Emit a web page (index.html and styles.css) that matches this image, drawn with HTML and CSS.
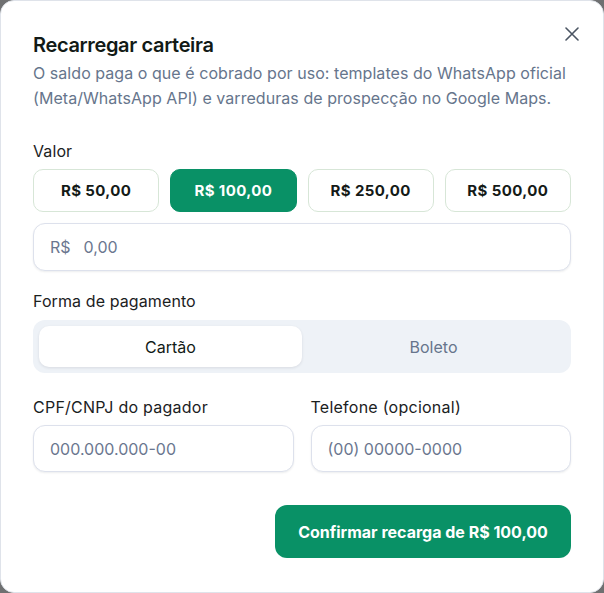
FILE: index.html
```html
<!DOCTYPE html>
<html lang="pt-BR">
<head>
    <meta charset="UTF-8">
    <title>Recarregar carteira</title>
    <link rel="stylesheet" href="styles.css">
</head>
<body>
<div class="modal">
    <button class="close" aria-label="Fechar">
        <svg width="14" height="14" viewBox="0 0 14 14"><path d="M1 1L13 13M13 1L1 13" stroke="#4b5563" stroke-width="1.6" stroke-linecap="round"/></svg>
    </button>
    <h2 class="title">Recarregar carteira</h2>
    <p class="desc">O saldo paga o que é cobrado por uso: templates do WhatsApp oficial (Meta/WhatsApp API) e varreduras de prospecção no Google Maps.</p>

    <div class="field first">
        <label class="label">Valor</label>
        <div class="amounts">
            <button class="amount">R$ 50,00</button>
            <button class="amount active">R$ 100,00</button>
            <button class="amount">R$ 250,00</button>
            <button class="amount">R$ 500,00</button>
        </div>
        <div class="input money">
            <span class="prefix">R$</span>
            <span class="ph">0,00</span>
        </div>
    </div>

    <div class="field">
        <label class="label">Forma de pagamento</label>
        <div class="tabs">
            <div class="tab on">Cartão</div>
            <div class="tab">Boleto</div>
        </div>
    </div>

    <div class="cols">
        <div class="col">
            <label class="label">CPF/CNPJ do pagador</label>
            <div class="input small"><span class="ph">000.000.000-00</span></div>
        </div>
        <div class="col">
            <label class="label">Telefone (opcional)</label>
            <div class="input small"><span class="ph">(00) 00000-0000</span></div>
        </div>
    </div>

    <div class="actions">
        <button class="confirm">Confirmar recarga de R$ 100,00</button>
    </div>
</div>
</body>
</html>
```
FILE: styles.css
```css
* {
    padding: 0;
    margin: 0;
    box-sizing: border-box;
}

html, body {
    height: 100%;
}

body {
    background: #6f7071;
    font-family: Inter, "Noto Sans", sans-serif;
    color: #111714;
}

button {
    font-family: inherit;
    cursor: pointer;
}

.modal {
    position: relative;
    height: 593px;
    background: #fff;
    border: 1px solid #dfe3ea;
    border-radius: 14px;
    padding: 30px 32px 0 32px;
}

.close {
    position: absolute;
    top: 25px;
    right: 23px;
    width: 16px;
    height: 16px;
    border: 0;
    background: none;
    display: flex;
    align-items: center;
    justify-content: center;
}

.title {
    font-size: 20px;
    font-weight: 600;
    line-height: 28px;
    letter-spacing: -0.35px;
    color: #121a16;
}

.desc {
    margin-top: 2px;
    font-size: 16px;
    line-height: 25px;
    color: #66758c;
    letter-spacing: 0.05px;
}

.field {
    margin-top: 20px;
}

.field.first {
    margin-top: 30px;
}

.label {
    display: block;
    font-size: 16px;
    line-height: 20px;
    color: #1b211e;
    font-weight: 400;
    letter-spacing: 0.1px;
}

.amounts {
    margin-top: 8px;
    display: grid;
    grid-template-columns: repeat(4, 1fr);
    gap: 11px;
}

.amount {
    height: 43px;
    border: 1px solid #d7e6d7;
    border-radius: 10px;
    background: #fff;
    font-size: 15px;
    font-weight: 700;
    color: #141a17;
    letter-spacing: 0.4px;
}

.amount.active {
    background: #099166;
    border-color: #099166;
    color: #fff;
}

.input {
    display: flex;
    align-items: center;
    border: 1px solid #dde1ec;
    border-radius: 12px;
    background: #fff;
    box-shadow: 0 1px 2px rgba(15, 23, 42, 0.08);
    font-size: 16px;
    padding: 0 16px;
}

.money {
    margin-top: 11px;
    height: 48px;
}

.prefix {
    color: #6b778f;
    margin-right: 13px;
}

.ph {
    color: #6b778f;
}

.tabs {
    margin-top: 9px;
    height: 53px;
    background: #eef2f7;
    border-radius: 12px;
    padding: 6px;
    display: grid;
    grid-template-columns: 1fr 1fr;
}

.tab {
    display: flex;
    align-items: center;
    justify-content: center;
    border-radius: 10px;
    font-size: 16px;
    color: #66758c;
}

.tab.on {
    background: #fff;
    color: #121a16;
    box-shadow: 0 1px 3px rgba(15, 23, 42, 0.1);
}

.cols {
    margin-top: 24px;
    display: grid;
    grid-template-columns: 1fr 1fr;
    gap: 17px;
}

.cols .label {
    letter-spacing: 0.25px;
}

.small {
    margin-top: 8px;
    height: 47px;
}

.actions {
    margin-top: 33px;
    display: flex;
    justify-content: flex-end;
}

.confirm {
    width: 296px;
    height: 53px;
    border: 0;
    border-radius: 12px;
    background: #099166;
    color: #fff;
    font-size: 16px;
    font-weight: 700;
}
```
